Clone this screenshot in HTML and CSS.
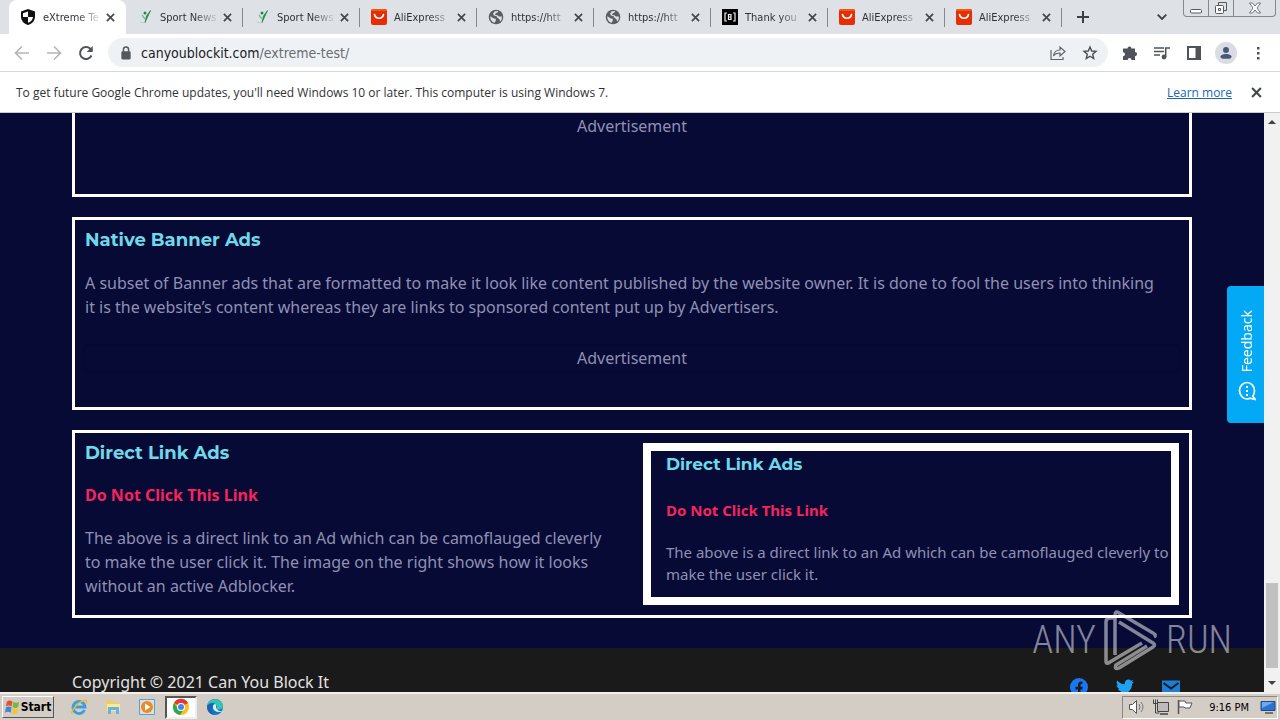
FILE: index.html
```html
<!DOCTYPE html>
<html lang="en">
<head>
<meta charset="utf-8">
<title>eXtreme Test</title>
<link rel="stylesheet" href="styles.css">
</head>
<body>
<svg class="defs" aria-hidden="true">
  <symbol id="close" viewBox="0 0 10 10"><path d="M1 1l8 8M9 1L1 9" stroke="#44474c" stroke-width="1.9" fill="none"/></symbol>
  <symbol id="ali" viewBox="0 0 16 16"><rect width="16" height="16" rx="2" fill="#e62e04"/><path d="M0 2q0-2 2-2h12q2 0 2 2H0z" fill="#ee5a14"/><path d="M3.500 5.500c1 5 8 5 9 0" fill="none" stroke="#fff" stroke-width="1.600" stroke-linecap="round"/></symbol>
  <symbol id="globe" viewBox="0 0 16 16"><circle cx="8" cy="8" r="7.300" fill="#5b5f65"/><path d="M2.300 7.200l3.600 2.200 1.800.3.200 1.600-1.200 2.400C4 13.200 2 10.500 2.300 7.200zM6.800 2.200l3.400-.2-.7 1.500-1.800.7-.6 1.700 2.300.4 1.600 1.300 2.800-.2c.5 2-.4 3.800-1.500 5l-1-2.300-2-1.300-.6-1.600-2.800-.8-.8-1.900z" fill="#dee1e6"/></symbol>
  <symbol id="sport" viewBox="0 0 16 16"><path d="M8 13.500L13.500 1.500 9.500 7z" fill="#238a4d" stroke="#238a4d" stroke-width=".8"/><path d="M5 6l3 4" stroke="#7fb893" stroke-width="1.300"/><circle cx="8" cy="4" r="1.500" fill="#238a4d"/><path d="M3 13l4 1" stroke="#c3cbc9"/></symbol>
</svg>

<header class="tabs">
  <div class="tab active"><svg class="fav" viewBox="0 0 16 16"><path d="M8 0l7 2.600v5C15 12 12 15 8 16 4 15 1 12 1 7.600v-5z" fill="#111"/><path d="M8 2.500v5.500H3V4.300zM8 8h5c-.3 3-2.200 5-5 5.800z" fill="#fff"/></svg><span class="name">eXtreme Te</span><button aria-label="Close tab"><svg><use href="#close"/></svg></button></div>
  <div class="tab"><svg class="fav"><use href="#sport"/></svg><span class="name">Sport News</span><button aria-label="Close tab"><svg><use href="#close"/></svg></button></div>
  <div class="tab"><svg class="fav"><use href="#sport"/></svg><span class="name">Sport News</span><button aria-label="Close tab"><svg><use href="#close"/></svg></button></div>
  <div class="tab"><svg class="fav"><use href="#ali"/></svg><span class="name">AliExpress</span><button aria-label="Close tab"><svg><use href="#close"/></svg></button></div>
  <div class="tab"><svg class="fav"><use href="#globe"/></svg><span class="name">https://htt</span><button aria-label="Close tab"><svg><use href="#close"/></svg></button></div>
  <div class="tab"><svg class="fav"><use href="#globe"/></svg><span class="name">https://htt</span><button aria-label="Close tab"><svg><use href="#close"/></svg></button></div>
  <div class="tab"><svg class="fav" viewBox="0 0 16 16"><path d="M0 0h16v16H0z"/><path d="M5 4H3v8h2M11 4h2v8h-2M6.500 5v6M6.500 5.500h2.500v5H6.500M6.500 8H9" fill="none" stroke="#eee" stroke-width="1.200"/></svg><span class="name">Thank you</span><button aria-label="Close tab"><svg><use href="#close"/></svg></button></div>
  <div class="tab"><svg class="fav"><use href="#ali"/></svg><span class="name">AliExpress</span><button aria-label="Close tab"><svg><use href="#close"/></svg></button></div>
  <div class="tab"><svg class="fav"><use href="#ali"/></svg><span class="name">AliExpress</span><button aria-label="Close tab"><svg><use href="#close"/></svg></button></div>
  <button class="new" aria-label="New tab"><svg width="12" height="12" viewBox="0 0 12 12"><path d="M6 0v12M0 6h12" stroke="#3c4043" stroke-width="2"/></svg></button>
  <button class="search" aria-label="Search tabs"><svg width="10" height="6" viewBox="0 0 10 6"><path d="M.7.700L5 5 9.300.700" fill="none" stroke="#3c4043" stroke-width="1.800"/></svg></button>
  <div class="controls">
    <button aria-label="Minimize"><svg width="12" height="12" viewBox="0 0 12 12"><rect x=".5" y="7.500" width="11" height="3.500" rx="1" fill="#fff" stroke="#55595e"/></svg></button>
    <button aria-label="Restore"><svg width="14" height="14" viewBox="0 0 14 14"><path d="M4.500 4V1.500h8v8H10" fill="none" stroke="#55595e"/><rect x="1.500" y="4.500" width="8" height="8" rx="1" fill="#fff" stroke="#55595e"/><path d="M4.500 7.500h2v2h-2z" fill="none" stroke="#55595e"/></svg></button>
    <button class="wide" aria-label="Close"><svg width="12" height="12" viewBox="0 0 12 12"><path d="M.5 1h3L6 4l2.500-3h3L8 6l3.500 5h-3L6 8l-2.500 3h-3L4 6z" fill="#fff" stroke="#55595e" stroke-width=".8"/></svg></button>
  </div>
</header>

<nav class="toolbar">
  <button aria-label="Back"><svg viewBox="0 0 16 16"><path d="M15 8H2M8 1.500L1.500 8 8 14.500" fill="none" stroke="#b4b6ba" stroke-width="1.700"/></svg></button>
  <button aria-label="Forward"><svg viewBox="0 0 16 16"><path d="M1 8h13M8 1.500L14.500 8 8 14.500" fill="none" stroke="#b4b6ba" stroke-width="1.700"/></svg></button>
  <button aria-label="Reload"><svg viewBox="0 0 16 16"><path d="M13.500 10.500A6 6 0 1 1 12.300 3.800L14 5.500" fill="none" stroke="#4f5358" stroke-width="2"/><path d="M14.700 1v6H8.700z" fill="#4f5358"/></svg></button>
  <div class="omnibox">
    <svg class="lock" viewBox="0 0 10 12"><rect x="1" y="4.500" width="8" height="7" rx="1" fill="#55595e"/><path d="M2.800 5V3a2.200 2.200 0 0 1 4.400 0v2" fill="none" stroke="#55595e" stroke-width="1.300"/></svg>
    <div class="url">canyoublockit.com<span>/extreme-test/</span></div>
    <button aria-label="Share"><svg viewBox="0 0 16 16"><path d="M1 5v9.500h12V12M3.500 11c.5-4 3-6 6.500-6V2l5 4.500-5 4.500V8c-3 0-5 .8-6.500 3z" fill="none" stroke="#5f6368" stroke-width="1.200"/></svg></button>
    <button aria-label="Bookmark"><svg viewBox="0 0 16 16"><path d="M8 2l1.700 4 4.300.4-3.300 2.800 1 4.300L8 11.200l-3.700 2.300 1-4.300L2 6.400 6.300 6z" fill="none" stroke="#4b4f54" stroke-width="1.400"/></svg></button>
  </div>
  <button aria-label="Extensions"><svg viewBox="0 0 16 16"><path d="M1 3.500h4.500a2 2 0 0 1 4 0h3.500V7a2 2 0 0 1 0 4.200V15H9.500a1.900 1.900 0 0 0-3.800 0H1v-3.800a2 2 0 0 0 0-4z" fill="#505459"/></svg></button>
  <button aria-label="Media"><svg viewBox="0 0 16 16"><path d="M0 3h10M0 6.500h10M0 10h6M11.700 12V3H16" fill="none" stroke="#505459" stroke-width="1.600"/><circle cx="10" cy="12" r="2.400" fill="#505459"/></svg></button>
  <button aria-label="Side panel"><svg viewBox="0 0 16 16"><path d="M2 2h12v12H2z" fill="none" stroke="#505459" stroke-width="2"/><path d="M9.500 2H15v12H9.500z" fill="#505459"/></svg></button>
  <button class="avatar" aria-label="Profile"><svg viewBox="0 0 16 16"><circle cx="8" cy="4.500" r="3.400" fill="#46597a"/><path d="M1.500 14.500v-2c0-4.500 13-4.500 13 0v2z" fill="#46597a"/></svg></button>
  <button aria-label="Menu"><svg viewBox="0 0 16 16"><path d="M7 2h2.500v2.500H7zM7 7h2.500v2.500H7zM7 12h2.500v2.500H7z" fill="#505459"/></svg></button>
</nav>

<div class="infobar">
  <span>To get future Google Chrome updates, you'll need Windows 10 or later. This computer is using Windows 7.</span>
  <a href="#">Learn more</a>
  <button aria-label="Dismiss"><svg><use href="#close"/></svg></button>
</div>

<div class="viewport">
  <main class="page">
    <section class="card cut"><p class="ad">Advertisement</p></section>
    <section class="card">
      <h2>Native Banner Ads</h2>
      <p class="text">A subset of Banner ads that are formatted to make it look like content published by the website owner. It is done to fool the users into thinking it is the website’s content whereas they are links to sponsored content put up by Advertisers.</p>
      <p class="ad framed">Advertisement</p>
    </section>
    <section class="card split">
      <div class="left">
        <h2>Direct Link Ads</h2>
        <a class="danger" href="#">Do Not Click This Link</a>
        <p class="text">The above is a direct link to an Ad which can be camoflauged cleverly to make the user click it. The image on the right shows how it looks without an active Adblocker.</p>
      </div>
      <div class="sample">
        <h3>Direct Link Ads</h3>
        <b class="danger">Do Not Click This Link</b>
        <p>The above is a direct link to an Ad which can be camoflauged cleverly to make the user click it.</p>
      </div>
    </section>
    <footer>
      <span>Copyright © 2021 Can You Block It</span>
      <div class="social">
        <a href="#" aria-label="Facebook"><svg viewBox="0 0 18 18"><circle cx="9" cy="9" r="9" fill="#1877f2"/><path d="M8 18v-6.500H5.500V8.700H8V7c0-2.600 1.500-3.800 4.500-3.400V6c-1.500-.1-2 .1-2 1.300v1.400h2.300l-.4 2.800h-1.900V18z" fill="#1a1a1a"/></svg></a>
        <a href="#" aria-label="Twitter"><svg viewBox="0 0 18 18"><path d="M18 3.700l-1.900 2C16.300 12 11 17 4.500 16.300 3 16.200 1.200 15.700 0 14.800c2 .1 3.800-.4 5.200-1.500-1.700-.2-2.800-1-3.300-2.500l1.500-.1C1.700 10.100.6 8.800.6 7l1.600.5C.6 6.200.2 4.300 1.200 2.500c2 2.300 4.500 3.600 7.600 3.800C8 1.500 13 .3 15 2.800l2.400-.9-1.600 2z" fill="#1da1f2"/></svg></a>
        <a href="#" aria-label="Email"><svg viewBox="0 0 18 18"><path d="M0 2.500h18V17H0z" fill="#1c7ed6"/><path d="M1.500 5L9 10.500 16.500 5" fill="none" stroke="#1a1a1a" stroke-width="2"/></svg></a>
      </div>
    </footer>
  </main>
  <div class="scroll"><i class="up"></i><div class="thumb"></div><i class="down"></i></div>
  <button class="feedback"><span>Feedback</span><svg viewBox="0 0 18 20"><path d="M14.500 15.500C16 14 16.500 12 16.500 9.500 16.500 5 13 1.500 9 1.500S1.500 5 1.500 9.500 5 18 9 18q2 0 3-.8l5.500 1.300-3-3.500" fill="none" stroke="#fff" stroke-width="1.700"/><path d="M8 5h2v2H8zM8 9h2v2H8zM8 13h2v2H8z" fill="#fff"/></svg></button>
  <div class="mark"><span>ANY</span><svg viewBox="0 0 56 64"><path d="M12 47V7q0-5 4-2l34 20q4 2 1 4M16 14l34 21q3 2 0 4L16 60q-5 2-3-3l31-19M13 10H7q-4 0-4 4v39q0 4 4 1l32-19" fill="none" stroke="currentColor" stroke-width="3.500" stroke-linejoin="round"/></svg><span>RUN</span></div>
</div>

<footer class="taskbar">
  <button class="start"><svg viewBox="0 0 16 16"><path d="M2 2q3-2 6 0L7 7.500q-3-2-6 0z" fill="#e8512d"/><path d="M9 2.500q3 2 6 0L14 8q-3 2-6 0z" fill="#76b83f"/><path d="M1 8.500q3-2 6 0L6 14q-3-2-6 0z" fill="#3b87d9"/><path d="M8 9q3 2 6 0l-1 5.500q-3 2-6 0z" fill="#f6c335"/></svg>Start</button>
  <div class="apps">
    <button aria-label="Internet Explorer"><svg viewBox="0 0 18 18"><path d="M14.500 12A6 6 0 1 1 15 9H4" fill="none" stroke="#3a9fe0" stroke-width="2.800"/><path d="M2.500 15C-1 18 5 5 14 2.500c3.500-1 3 1.500 2 3" fill="none" stroke="#e6bd3a" stroke-width="1.500"/></svg></button>
    <button aria-label="Explorer"><svg viewBox="0 0 18 18"><path d="M2 2h6l1 2h6v9H2z" fill="#e9cf69"/><path d="M3 6h13v7H3z" fill="#f7e99f"/><path d="M4 9h11v7h-3v-4H7v4H4z" fill="#69b4dc"/></svg></button>
    <button aria-label="Media Player"><svg viewBox="0 0 18 18"><path d="M1.500 1.500h15v15h-15z" fill="#cfe3f4" stroke="#629dcc"/><circle cx="9" cy="9" r="6" fill="#f08a1c"/><path d="M7 5.500L12.500 9 7 12.500z" fill="#fff"/></svg></button>
    <button class="on" aria-label="Chrome"><svg viewBox="0 0 18 18"><circle cx="9" cy="9" r="8" fill="#fbc116"/><path d="M9 9L2 5A8 8 0 0 1 16 5z" fill="#e33b2e"/><path d="M9 9H5L2 5a8 8 0 0 0 6 12l4-6z" fill="#2da94f"/><circle cx="9" cy="9" r="4" fill="#fff"/><circle cx="9" cy="9" r="3" fill="#4285f4"/></svg></button>
    <button aria-label="Edge"><svg viewBox="0 0 18 18"><circle cx="9" cy="9" r="8" fill="#1277c4"/><path d="M1 8C2-1 16-1 17 8c0 3-3 4-6 3 1-5-5-6-10-3z" fill="#37c2b1"/><path d="M11 11c-2-2 0-4-2-5-3 0-4 9 6 8l1-1q-3 1-5-2z" fill="#d9eef5"/><path d="M1 8c3-4 7-3 8-2-4 0-5 7 0 10.500C3 17 1 12 1 8z" fill="#1b63b5"/></svg></button>
  </div>
  <div class="tray">
    <svg viewBox="0 0 18 18"><path d="M1.500 6.500h3l4-4v13l-4-4h-3z" fill="#fff" stroke="#555"/><path d="M11 6q2 3 0 6M13 4q4 5 0 10" fill="none" stroke="#777"/></svg>
    <svg viewBox="0 0 18 18"><path d="M5.500 4.500h11v9h-11z" fill="#bbb" stroke="#444"/><path d="M8 16h8" stroke="#444" stroke-width="1.500"/><path d="M1.500 1.500v4h2v9.500h4M5.500 5.500v-4M1.500 5.500h4M3.500 1.500v4" fill="none" stroke="#444"/></svg>
    <svg viewBox="0 0 18 18"><path d="M2.500 2v14" stroke="#555" stroke-width="1.500"/><path d="M3 3h6l1 2h6l-2 5H9L8 9H3z" fill="#fff" stroke="#555"/></svg>
    <time>9:16 PM</time>
    <svg viewBox="0 0 18 18"><path d="M2 3.500h14v9H2z" fill="#2c72d0" stroke="#244a7c"/><path d="M3 4h12L3 10z" fill="#6aaaf0"/><path d="M6 15h8" stroke="#555" stroke-width="1.500"/></svg>
  </div>
</footer>
</body>
</html>
```
FILE: styles.css
```css
* { box-sizing: border-box; }
body { margin: 0; height: 100vh; display: flex; flex-direction: column; overflow: hidden; font: 12px "DejaVu Sans Condensed", "Noto Sans", sans-serif; color: #303236; background: #fff; }
button { border: 0; padding: 0; margin: 0; background: none; font: inherit; color: inherit; display: flex; align-items: center; justify-content: center; flex: none; }
h2, h3, p { margin: 0; }
.defs { position: absolute; width: 0; height: 0; }

.tabs { flex: none; height: 34px; display: flex; background: #dee1e6; padding-left: 9px; }
.tab { flex: 0 1 117px; min-width: 0; display: flex; align-items: center; padding: 0 6px 0 11px; position: relative; }
.tab:not(.active)::after { content: ""; position: absolute; right: 0; top: 8px; height: 19px; width: 1px; background: #85888d; }
.tab.active { background: #fff; border-radius: 8px 8px 0 0; }
.tab.active + .tab { margin-left: 0; }
.fav { width: 16px; height: 16px; flex: none; margin-right: 7px; }
.name { flex: 1; overflow: hidden; white-space: nowrap; font: 11px "DejaVu Sans Condensed", sans-serif; -webkit-mask-image: linear-gradient(90deg, #000 60%, #0003 95%); mask-image: linear-gradient(90deg, #000 60%, #0003 95%); }
.tab button { width: 20px; height: 20px; }
.tab button svg { width: 9px; height: 9px; }
.new { width: 42px; }
.search { width: 30px; margin-left: auto; }
.controls { display: flex; flex: none; height: 17px; margin: 0 4px 0 6px; border: 1px solid #85888d; border-top: 0; border-radius: 0 0 4px 4px; }
.controls button { width: 25px; border-right: 1px solid #85888d; }
.controls .wide { width: 41px; border: 0; }

.toolbar { flex: none; height: 38px; display: flex; align-items: center; padding: 0 6px; border-bottom: 1px solid #d5d7da; }
.toolbar > button { width: 32px; height: 32px; }
.toolbar button svg { width: 16px; height: 16px; }
.omnibox { flex: 1; height: 29px; margin: 0 6px; padding: 0 2px 0 12px; border-radius: 15px; background: #eff2f5; display: flex; align-items: center; }
.lock { width: 12px; height: 14px; margin-right: 9px; }
.url { flex: 1; font: 14px "DejaVu Sans Condensed", sans-serif; color: #202124; }
.url span { color: #696d72; }
.omnibox button { width: 32px; height: 29px; }
.toolbar .avatar svg { width: 22px; height: 22px; padding: 4px; border-radius: 50%; background: #d9dde3; }

.infobar { flex: none; height: 41px; display: flex; align-items: center; padding: 0 18px 0 16px; border-bottom: 1px solid #c9cbcd; font-family: "Open Sans", sans-serif; }
.infobar a { margin-left: auto; color: #1967b5; }
.infobar button { margin-left: 18px; width: 12px; }
.infobar button svg { width: 11px; height: 11px; }

.viewport { flex: 1; min-height: 0; display: flex; position: relative; background: #070a35; }
.page { flex: 1; overflow: hidden; font: 16px/24px "Noto Sans", sans-serif; color: #9090b4; display: flex; flex-direction: column; }
.card { flex: none; margin: 0 72px 20px; border: 3px solid #fff; padding: 10px; }
.cut { border-top: 0; padding: 1px 10px 56px; }
h2 { font: 700 18px/20px Montserrat, Inter, sans-serif; color: #6fd9ea; margin-bottom: 21px; }
.text { padding-right: 16px; }
.ad { text-align: center; }
.framed { margin: 27px 0; border-radius: 3px; box-shadow: 0 0 3px #04062a; }
.split { display: flex; gap: 20px; margin-bottom: 30px; padding-bottom: 14px; }
.left { flex: 1; }
.danger { display: block; color: #f6245d; font-weight: 700; text-decoration: none; margin-bottom: 19px; }
.split h2 { margin-bottom: 20px; }
.sample { width: 49%; flex: none; border: 8px solid #fff; padding: 4px 0 12px 15px; font-size: 15px; line-height: 22px; margin-bottom: -4px; }
h3 { font: 700 17px/18px Montserrat, Inter, sans-serif; color: #6fd9ea; margin-bottom: 26px; }
.sample .danger { margin-bottom: 20px; }
.page footer { flex: 1; background: #1a1a1a; color: #e2e2e2; padding: 22px 84px 0 72px; display: flex; justify-content: space-between; align-items: flex-start; }
.social { display: flex; gap: 28px; padding-top: 8px; }
.social a { height: 18px; }
.social svg { width: 18px; height: 18px; display: block; }

.scroll { width: 16px; flex: none; background: #f1f1f1; display: flex; flex-direction: column; align-items: center; padding: 7px 0; }
.scroll i { border: 4px solid transparent; }
.scroll .up { border-top: 0; border-bottom-color: #404040; }
.scroll .down { border-bottom: 0; border-top-color: #404040; }
.thumb { width: 12px; height: 85px; background: #c1c1c1; margin: auto 0 13px; }
.feedback { position: absolute; right: 16px; top: 173px; width: 37px; height: 137px; border-radius: 4px 0 0 4px; background: #03a9f4; color: #fff; flex-direction: column; gap: 8px; padding: 2px 0 0 2px; font: 14px "Noto Sans", sans-serif; }
.feedback span { writing-mode: vertical-rl; transform: rotate(180deg); }
.feedback svg { width: 18px; height: 20px; }
.mark { position: absolute; right: 48px; bottom: 20px; display: flex; align-items: center; gap: 7px; color: #ffffff80; font: 300 38px "Roboto Condensed", "Liberation Sans Narrow", sans-serif; pointer-events: none; }
.mark svg { width: 56px; height: 64px; }

.taskbar { flex: none; height: 28px; display: flex; align-items: center; background: #d4cdc6; border-top: 2px solid #f2efeb; padding: 0 2px; color: #000; }
.start { height: 22px; width: 52px; font-weight: 700; gap: 1px; border: 1px solid #fff; border-right-color: #555; border-bottom-color: #555; }
.start svg { width: 15px; height: 16px; }
.apps { display: flex; gap: 2px; margin-left: 9px; }
.apps button { width: 32px; height: 23px; }
.apps .on { background: #fff; border: 2px solid #555; border-right-color: #eee; border-bottom-color: #eee; }
.apps svg { width: 18px; height: 18px; flex: none; }
.tray { margin-left: auto; display: flex; align-items: center; gap: 6px; height: 23px; padding: 0 0 0 5px; border: 1px solid #888; border-right-color: #fff; border-bottom-color: #fff; }
.tray svg { width: 18px; height: 18px; }
.tray time { padding: 0 4px 0 9px; font-size: 11px; }
```
